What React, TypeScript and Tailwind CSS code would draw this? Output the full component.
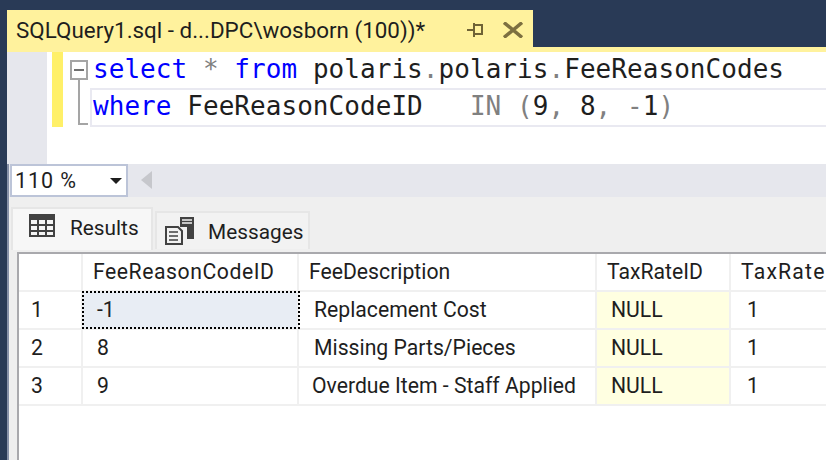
const uiFont = "font-['Roboto','Noto_Sans',sans-serif]";

const PinIcon = () => (
  <svg width="16" height="14" viewBox="0 0 16 14" fill="none" stroke="#6f6335" strokeWidth="2">
    <path d="M0 7h6M7 0v14M7 2h8v9H7" />
  </svg>
);

const CloseIcon = () => (
  <svg width="20" height="16" viewBox="0 0 20 16" fill="none" stroke="#7d7040" strokeWidth="3.4">
    <path d="M1 0.5l18 15M19 0.5L1 15.5" />
  </svg>
);

const GridIcon = () => (
  <svg width="26" height="23" viewBox="0 0 26 23" fill="#424242">
    <path d="M0 0h26v23H0z" />
    <path fill="#f5f5f5" d="M2 6h6v4H2zM10 6h6v4h-6zM18 6h6v4h-6zM2 12h6v4H2zM10 12h6v4h-6zM18 12h6v4h-6zM2 18h6v3H2zM10 18h6v3h-6zM18 18h6v3h-6z" />
  </svg>
);

const MessagesIcon = () => (
  <svg width="29" height="28" viewBox="0 0 29 28" fill="none">
    <path fill="#424242" d="M15 0h14v22h-7V10h-7z" />
    <path stroke="#f2f2f2" strokeWidth="1.5" d="M17 3h10M17 6h10" />
    <path stroke="#424242" strokeWidth="2" d="M1 10h12l4 4v13H1z" />
    <path stroke="#424242" strokeWidth="1.5" d="M4 15h9M4 19h9M4 23h9" />
  </svg>
);

const rows = [
  { n: '1', id: '-1', desc: 'Replacement Cost', pad: 'pl-[15px]' },
  { n: '2', id: '8', desc: 'Missing Parts/Pieces', pad: 'pl-[15px]' },
  { n: '3', id: '9', desc: 'Overdue Item - Staff Applied', pad: 'pl-[13px]' },
];

const headers = [
  { label: 'FeeReasonCodeID', track: 'tracking-[0.55px]' },
  { label: 'FeeDescription', track: '' },
  { label: 'TaxRateID', track: '' },
  { label: 'TaxRateSetID', track: 'tracking-[1.2px]' },
];

const gridCols = 'grid grid-cols-[64px_216px_298px_134px_116px]';

export default function App() {
  return (
    <div className={`w-[826px] h-[460px] overflow-hidden bg-[#293a56] pt-[10px] pl-[7px] text-[#1e1e1e] ${uiFont}`}>
      <div className="flex h-[42px] flex-col">
        <div className="flex h-[37px] shrink-0">
          <div className="flex h-[42px] w-[526px] items-center bg-[#fff29d] pl-[9px] pb-[2px]">
            <span className="w-[451px] whitespace-nowrap text-[22.4px] leading-none">SQLQuery1.sql - d...DPC\wosborn (100))*</span>
            <span className="flex"><PinIcon /></span>
            <span className="ml-[20px] flex"><CloseIcon /></span>
          </div>
        </div>
        <div className="h-[5px] bg-[#fff29d]" />
      </div>

      <div className="flex h-[112px] bg-white">
        <div className="w-[40px] bg-[#e6e7ed]" />
        <div className="ml-[5px] h-[75px] w-[11px] bg-[#fff068]" />
        <div className="ml-[7px] flex w-[18px] flex-col pt-[8px]">
          <div className="flex h-[20px] w-[18px] items-center justify-center border-2 border-[#a5a5a5] bg-white">
            <div className="h-[2px] w-[10px] bg-[#707070]" />
          </div>
          <div className="ml-[8px] h-[45px] w-[10px] border-b-2 border-l-2 border-[#a5a5a5]" />
        </div>
        <div className="flex-1 whitespace-pre font-['DejaVu_Sans_Mono',monospace] text-[26px] leading-[34px] tracking-[0.05px]">
          <div className="ml-[5px] h-[36px]">
            <span className="text-[#0000ff]">select</span>
            <span className="text-[#808080]"> * </span>
            <span className="text-[#0000ff]">from</span>
            <span> polaris</span><span className="text-[#808080]">.</span>polaris<span className="text-[#808080]">.</span>FeeReasonCodes
          </div>
          <div className="ml-[2px] h-[39px] border-y-2 border-l-2 border-[#e9e9f1] pl-[1px] leading-[33px]">
            <span className="text-[#0000ff]">where</span>
            <span> FeeReasonCodeID   </span>
            <span className="text-[#808080]">IN (</span>9<span className="text-[#808080]">,</span> 8<span className="text-[#808080]">, -</span>1<span className="text-[#808080]">)</span>
          </div>
        </div>
      </div>

      <div className="flex h-[33px] border-l-2 border-[#8791a8] bg-[#e6e7ed]">
        <div className="ml-[1px] flex h-[33px] w-[118px] items-center justify-between border-2 border-[#bcc4d8] bg-white pl-[3px] pr-[4px]">
          <span className="text-[21.5px] leading-none tracking-[0.9px]">110 %</span>
          <svg width="12" height="6" viewBox="0 0 12 6" fill="#1e1e1e"><path d="M0 0h12L6 6z" /></svg>
        </div>
        <svg className="ml-[13px] mt-[7px]" width="11" height="18" viewBox="0 0 11 18" fill="#c6c7cc"><path d="M11 0v18L0 9z" /></svg>
      </div>

      <div className="h-[263px] border-l-2 border-[#8791a8] bg-[#efefef]">
        <div className="flex h-[55px] items-end pl-[2px]">
          <div className="mb-[2px] flex h-[43px] w-[142px] items-start gap-[15px] border-x-2 border-t-2 border-[#e6e6e6] bg-[#f7f7f7] pl-[16px] pt-[5px]">
            <GridIcon />
            <span className="mt-[4px] text-[20.8px] leading-none">Results</span>
          </div>
          <div className="mb-[3px] ml-[2px] flex h-[38px] w-[155px] items-center gap-[14px] border-x-2 border-t-2 border-[#e6e6e6] bg-[#f2f2f2] pl-[8px]">
            <MessagesIcon />
            <span className="mt-[3px] text-[20.8px] leading-none">Messages</span>
          </div>
        </div>
        <div className="ml-[8px] h-[208px] border-t-2 border-l-2 border-[#a9a9ad] bg-white text-[21.2px] leading-none">
          <div className={`${gridCols} h-[38px] border-b-2 border-[#f0f0f0]`}>
            <div className="border-r-2 border-[#f0f0f0]" />
            {headers.map((h) => (
              <div key={h.label} className={`flex items-center overflow-hidden whitespace-nowrap border-r-2 border-[#f0f0f0] pl-[10px] ${h.track}`}>{h.label}</div>
            ))}
          </div>
          {rows.map((r) => (
            <div key={r.n} className={`${gridCols} h-[38px] border-b-2 border-[#f0f0f0]`}>
              <div className="ml-[2px] flex items-center border-r-2 border-[#f0f0f0] pl-[10px]">{r.n}</div>
              <div className={`flex items-center border-r-2 border-[#f0f0f0] pl-[14px] ${r.n === '1' ? 'bg-[#e8edf4] outline-2 outline-dotted outline-offset-[-1px] outline-black' : ''}`}>{r.id}</div>
              <div className={`flex items-center whitespace-nowrap border-r-2 border-[#f0f0f0] ${r.pad}`}>{r.desc}</div>
              <div className="flex items-center border-r-2 border-[#f0f0f0] bg-[#ffffe1] pl-[14px]">NULL</div>
              <div className="flex items-center pl-[16px]">1</div>
            </div>
          ))}
        </div>
      </div>
    </div>
  );
}
